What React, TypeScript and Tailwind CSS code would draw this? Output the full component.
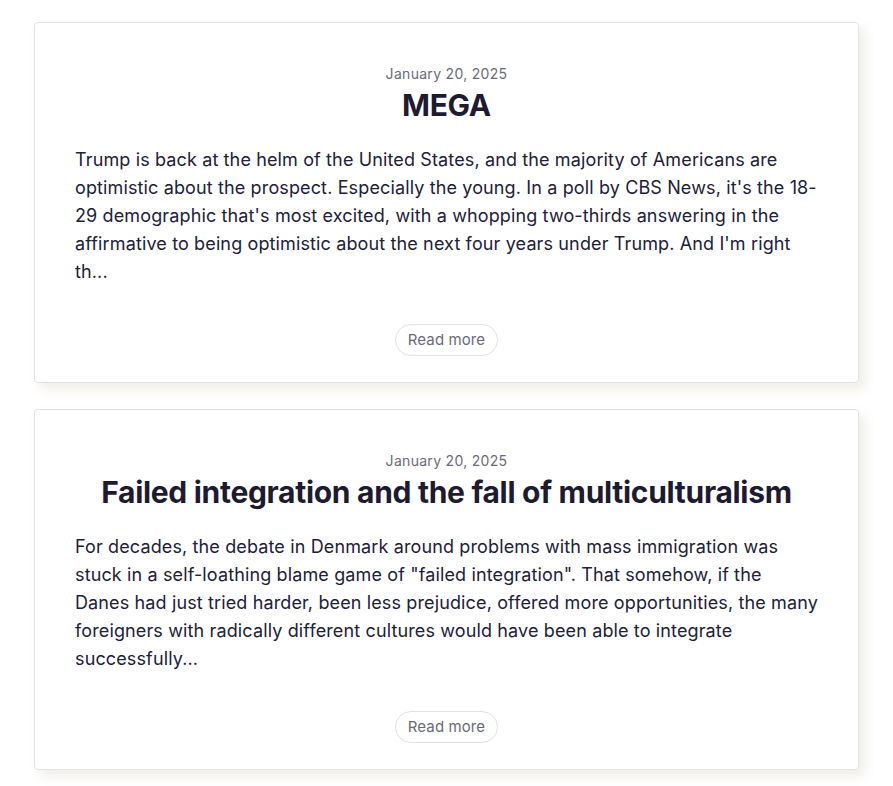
import React from "react";

const posts = [
  {
    date: "January 20, 2025",
    title: "MEGA",
    body: "Trump is back at the helm of the United States, and the majority of Americans are optimistic about the prospect. Especially the young. In a poll by CBS News, it's the 18-29 demographic that's most excited, with a whopping two-thirds answering in the affirmative to being optimistic about the next four years under Trump. And I'm right th...",
  },
  {
    date: "January 20, 2025",
    title: "Failed integration and the fall of multiculturalism",
    body: "For decades, the debate in Denmark around problems with mass immigration was stuck in a self-loathing blame game of \"failed integration\". That somehow, if the Danes had just tried harder, been less prejudice, offered more opportunities, the many foreigners with radically different cultures would have been able to integrate successfully...",
  },
];

export default function App() {
  return (
    <div
      className="min-h-screen bg-white px-[34px] pt-[22px] pb-6 flex flex-col gap-[26px]"
      style={{ fontFamily: "Inter, 'Noto Sans', sans-serif" }}
    >
      {posts.map((p, i) => (
        <div
          key={i}
          className="h-[361px] border border-[#e3e3e3] rounded-[4px] bg-white shadow-[6px_6px_12px_rgba(120,90,50,0.11)] px-10 pt-[41px] flex flex-col"
        >
          <div className="text-center text-[14px] leading-5 tracking-[0.3px] text-[#6b6b78]">{p.date}</div>
          <h2 className="text-center text-[30px] leading-9 font-bold tracking-[-0.3px] text-[#1d1a31] mt-[3px]">
            {p.title}
          </h2>
          <p className="mt-[23px] text-[18px] leading-7 tracking-[0.13px] text-[#22203a]">{p.body}</p>
          <div className="flex justify-center mt-[38px]">
            <button className="h-[32px] px-[12px] rounded-full border border-[#e2e2e2] text-[15px] tracking-[0.1px] text-[#6b6a78] bg-white">
              Read more
            </button>
          </div>
        </div>
      ))}
    </div>
  );
}
